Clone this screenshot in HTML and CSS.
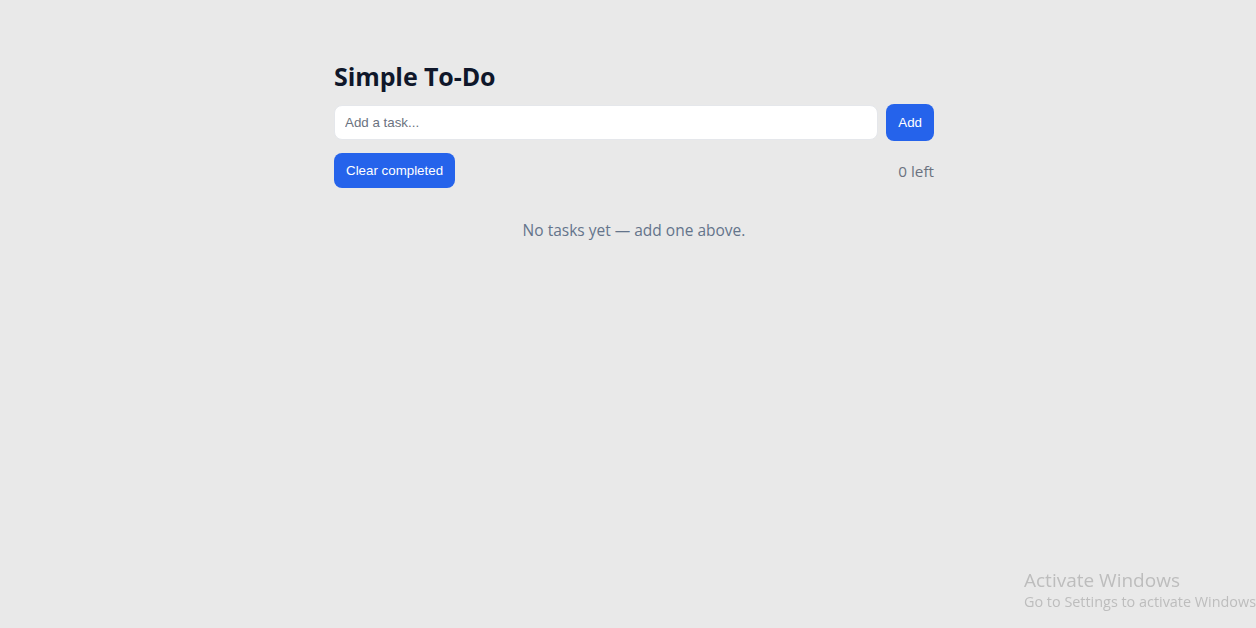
FILE: index.html
```html
<!DOCTYPE html>
<html lang="en">
<head>
    <meta charset="UTF-8">
    <meta name="viewport" content="width=device-width, initial-scale=1.0">
    <title>Simple To-Do</title>
    <link rel="stylesheet" href="styles.css">
</head>
<body>
    <div class="app">
        <h1 class="title">Simple To-Do</h1>
        <form class="add-row" onsubmit="return false">
            <input class="task-input" type="text" placeholder="Add a task...">
            <button class="btn" type="submit">Add</button>
        </form>
        <div class="toolbar">
            <button class="btn btn-clear" type="button">Clear completed</button>
            <span class="count">0 left</span>
        </div>
        <p class="empty">No tasks yet — add one above.</p>
    </div>

    <div class="watermark">
        <div class="wm-title">Activate Windows</div>
        <div class="wm-sub">Go to Settings to activate Windows.</div>
    </div>
</body>
</html>
```

FILE: styles.css
```css
body {
    margin: 0;
    background-color: rgb(233, 233, 233);
    font-family: "Open Sans", "Noto Sans", sans-serif;
    color: #0f172a;
    overflow: hidden;
}
.app {
    width: 600px;
    margin: 0 auto;
    padding: 58px 0 0 12px;
}
.title {
    font-size: 25px;
    font-weight: 700;
    margin: 0 0 10px 0;
    line-height: 36px;
    letter-spacing: -0.1px;
}
.add-row {
    display: flex;
    gap: 8px;
    align-items: center;
}
.task-input {
    flex: 1;
    height: 35px;
    box-sizing: border-box;
    border: 1px solid #e5e7eb;
    border-radius: 8px;
    background: #fff;
    padding: 0 10px;
    font-family: "Liberation Sans", Arial, sans-serif;
    font-size: 13.33px;
    outline: none;
}
.task-input::placeholder {
    color: #6b7280;
}
.btn {
    height: 37px;
    padding: 0 12px;
    border: none;
    border-radius: 8px;
    background-color: #2563eb;
    color: #fff;
    font-family: "Liberation Sans", Arial, sans-serif;
    font-size: 13.33px;
}
.toolbar {
    display: flex;
    justify-content: space-between;
    align-items: center;
    margin-top: 12px;
}
.btn-clear {
    height: 35px;
}
.count {
    font-size: 15.3px;
    color: #6b7280;
}
.empty {
    text-align: center;
    color: #64748b;
    font-size: 15.5px;
    margin: 31px 0 0 0;
}
.watermark {
    position: fixed;
    left: 1024px;
    top: 568px;
    color: #bdbdbd;
    font-family: "Open Sans", "Noto Sans", sans-serif;
    white-space: nowrap;
}
.wm-title {
    font-size: 19px;
    line-height: 24px;
}
.wm-sub {
    font-size: 14.4px;
    line-height: 20px;
}
```
